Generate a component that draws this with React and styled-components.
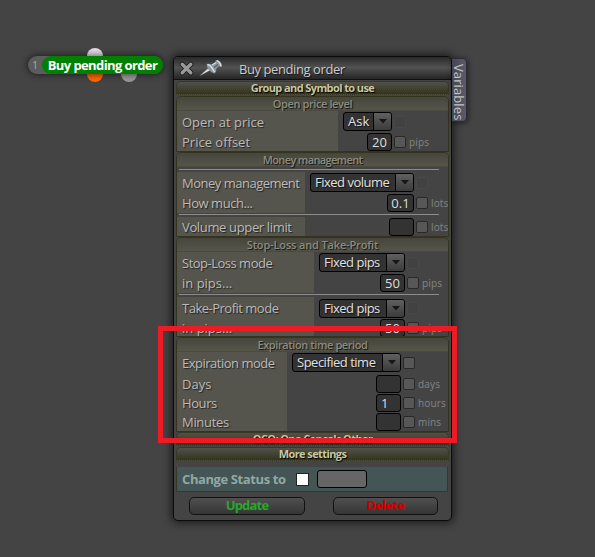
import React from "react";
import styled, { createGlobalStyle } from "styled-components";

const GlobalStyle = createGlobalStyle`
  * { box-sizing: border-box; }
  html, body { margin: 0; height: 557px; overflow: hidden; background: #444; }
  body { font-family: "Open Sans", "Noto Sans", sans-serif; font-size: 13px; color: #bbb; }
`;

const Canvas = styled.div`
  position: relative;
  width: 595px;
  height: 557px;
  background: #444;
  overflow: hidden;
`;

const Node = styled.div`
  position: absolute;
  left: 28px;
  top: 56px;
  width: 135px;
  height: 18px;
  display: flex;
  border-radius: 9px;
  background: #5c5c5c;
  box-shadow: 0 0 6px 1px rgba(0, 0, 0, 0.55);
`;

const NodeIndex = styled.span`
  width: 14px;
  text-align: center;
  font-size: 10px;
  line-height: 18px;
  color: #aaa;
`;

const NodeTitle = styled.div`
  flex: 1;
  border-radius: 9px;
  background: #008000;
  color: #fff;
  font-size: 13px;
  font-weight: 700;
  line-height: 18px;
  text-align: center;
  white-space: nowrap;
  letter-spacing: -0.6px;
`;

const Port = styled.i`
  position: absolute;
  left: ${(p) => p.$x}px;
  top: ${(p) => p.$y}px;
  width: 16px;
  height: 16px;
  border-radius: 50%;
  background: ${(p) => p.$color};
`;

const Dialog = styled.section`
  position: absolute;
  left: 173px;
  top: 56px;
  width: 279px;
  height: 465px;
  border: 1px solid #0b0b0b;
  border-radius: 5px;
  background: #444;
  box-shadow: 0 0 8px 2px rgba(0, 0, 0, 0.6);
`;

const TitleBar = styled.header`
  height: 23px;
  display: flex;
  align-items: center;
  border-bottom: 1px solid #111;
  border-radius: 4px 4px 0 0;
  background: linear-gradient(#292929, #525252 48%, #484848 60%, #252525);
  padding-left: 5px;
`;

const Title = styled.h1`
  margin: 1px 0 0 16px;
  font-size: 13px;
  font-weight: 400;
  line-height: 20px;
  letter-spacing: -0.42px;
  color: #ccc;
  text-shadow: 1px 1px 1px #111;
  white-space: nowrap;
`;

const Content = styled.div`
  width: 273px;
  margin: 1px 0 0 2px;
  display: flex;
  flex-direction: column;
`;

const Bar = styled.div`
  height: 14px;
  margin-bottom: ${(p) => p.$gap || 0}px;
  border: 1px solid #383824;
  border-bottom-style: dotted;
  border-radius: 5px 5px 0 0;
  background: linear-gradient(#515147, #34341f);
  color: #c8c8a0;
  font-size: 11px;
  font-weight: 700;
  letter-spacing: -0.6px;
  line-height: 12px;
  text-align: center;
  text-shadow: 1px 1px 1px #000;
  white-space: nowrap;
`;

const Group = styled.section`
  height: ${(p) => p.$height}px;
  border: 1px solid #33331e;
  border-radius: 5px 5px 0 0;
  overflow: hidden;
`;

const GroupHeader = styled.h2`
  margin: 0;
  height: 14px;
  border-bottom: 1px solid #4a4a40;
  background: linear-gradient(#46463d, #55554a);
  color: #8c8c80;
  font-size: 11px;
  font-weight: 600;
  letter-spacing: ${(p) => p.$spacing}px;
  line-height: 13px;
  text-align: center;
  text-shadow: 1px 1px 1px #111;
`;

const Row = styled.div`
  display: flex;
  align-items: center;
  height: ${(p) => p.$height || 20}px;
`;

const Label = styled.label`
  width: ${(p) => p.$width}px;
  height: 100%;
  padding-left: 5px;
  display: flex;
  align-items: center;
  background: #55554d;
  color: #bbb;
  letter-spacing: ${(p) => p.$spacing || 0}px;
  white-space: nowrap;
  text-shadow: 1px 1px 1px #222;
`;

const Rule = styled.hr`
  width: 260px;
  height: 1px;
  flex: none;
  margin: ${(p) => p.$top || 2}px 0 2px 2px;
  border: 0;
  background: #8c8c8c;
`;

const Field = styled.div`
  width: ${(p) => p.$width || 25}px;
  height: 18px;
  margin-left: auto;
  flex: none;
  border: 1px solid #000;
  border-radius: 3px;
  background: #333;
  color: #ddd;
  line-height: 16px;
  text-align: ${(p) => (p.$start ? "left" : "center")};
  padding-left: ${(p) => (p.$start ? 4 : 0)}px;
  white-space: nowrap;
`;

const Select = styled.div`
  display: flex;
  width: ${(p) => p.$width}px;
  height: 19px;
  margin-left: auto;
  flex: none;
  border: 1px solid #000;
  border-radius: 3px;
  overflow: hidden;
  background: #333;
  color: #e0e0e0;
  line-height: 17px;
  text-shadow: 1px 1px 1px #111;
  white-space: nowrap;
`;

const SelectValue = styled.span`
  flex: 1;
  padding-left: 4px;
  letter-spacing: ${(p) => p.$spacing}px;
`;

const SelectButton = styled.span`
  width: 18px;
  display: grid;
  place-items: center;
  border-left: 1px solid #000;
  background: linear-gradient(#606060, #3b3b3b);
`;

const Unit = styled.div`
  width: ${(p) => p.$width}px;
  padding-left: 2px;
  display: flex;
  align-items: center;
  gap: 3px;
  flex: none;
  color: #858585;
  font-size: 10px;
  letter-spacing: 0.15px;
  white-space: nowrap;
`;

const Check = styled.i`
  width: 12px;
  height: 12px;
  flex: none;
  border: 1px solid ${(p) => (p.$faint ? "#484848" : "#292929")};
  border-radius: 2px;
  background: ${(p) => (p.$faint ? "#424242" : "#575757")};
`;

const Status = styled.div`
  width: 272px;
  height: 25px;
  margin: 6px 0 0 2px;
  padding-left: 5px;
  display: flex;
  align-items: center;
  border: solid #333827;
  border-width: 0 1px 1px;
  background: #435554;
`;

const StatusLabel = styled.span`
  width: 114px;
  color: #93a8a5;
  font-weight: 700;
  letter-spacing: -0.4px;
  line-height: 16px;
  margin-top: -1px;
  white-space: nowrap;
`;

const StatusCheck = styled.i`
  width: 13px;
  height: 13px;
  border: 1px solid #222;
  background: #fff;
`;

const StatusField = styled.i`
  width: 50px;
  height: 18px;
  margin-left: 8px;
  border: 1px solid #000;
  border-radius: 3px;
  background: #666;
`;

const Actions = styled.footer`
  display: flex;
  justify-content: space-between;
  margin: 5px 13px 0 15px;
`;

const Action = styled.button`
  width: ${(p) => p.$width}px;
  height: 18px;
  padding: 0 0 1px;
  border: 1px solid #111;
  border-radius: 5px;
  background: linear-gradient(#505050, #353535);
  color: ${(p) => p.$color};
  font: 700 13px/15px "Open Sans", "Noto Sans", sans-serif;
  letter-spacing: ${(p) => p.$spacing}px;
`;

const Tab = styled.aside`
  position: absolute;
  left: 452px;
  top: 58px;
  width: 15px;
  height: 64px;
  border: 1px solid #2b2b35;
  border-left: 0;
  border-radius: 0 5px 5px 0;
  background: linear-gradient(90deg, #454553, #5b5b6b);
  box-shadow: 1px 1px 5px 1px rgba(0, 0, 0, 0.4);
  color: #c4c4c4;
  font-size: 13px;
  line-height: 14px;
  letter-spacing: 0.1px;
  writing-mode: vertical-rl;
  padding-top: 5px;
  white-space: nowrap;
`;

const Highlight = styled.div`
  position: absolute;
  left: 158px;
  top: 326px;
  width: 299px;
  height: 117px;
  border: 5px solid #ed1c24;
`;

function CloseIcon() {
  return (
    <svg width="15" height="15" viewBox="0 0 15 15">
      <path d="M3.2 3.2 11.8 11.8M11.8 3.2 3.2 11.8" stroke="#181818" strokeWidth="5" strokeLinecap="round" />
      <path d="M3.2 3.2 11.8 11.8M11.8 3.2 3.2 11.8" stroke="#999" strokeWidth="3.4" strokeLinecap="round" />
    </svg>
  );
}

const Pin = styled.svg`
  margin-left: 5px;
`;

function PinIcon() {
  return (
    <Pin width="24" height="18" viewBox="0 0 24 18">
      <path d="M0.5 17 9.5 9 11.5 11Z" fill="#ddd" />
      <path d="M7.5 5.5Q10.5 4 13 6L17 3.5Q15.5 1.5 17.5 1Q23 2 23 7.5Q21 8.5 20 7L17 10Q18 12.5 15.5 14.5Q9 12.5 7.5 5.5Z" fill="#8d979f" />
      <path d="M8.5 5.5Q12 6 15.5 13M13 6 17 3.5M18 1.5Q21 3 22 7" fill="none" stroke="#dce2e5" strokeWidth="1.3" />
      <path d="M15 8.5 19 5.5" stroke="#59636b" strokeWidth="1.5" />
    </Pin>
  );
}

function Dropdown({ width, spacing, children }) {
  return (
    <Select $width={width}>
      <SelectValue $spacing={spacing}>{children}</SelectValue>
      <SelectButton>
        <svg width="8" height="5" viewBox="0 0 8 5">
          <path d="M0 0H8L4 4.5Z" fill="#161616" />
        </svg>
      </SelectButton>
    </Select>
  );
}

function Setting({ label, spacing, labelWidth, height, unitWidth, select, width, value, unit, faint, start }) {
  return (
    <Row $height={height}>
      <Label $width={labelWidth} $spacing={spacing}>{label}</Label>
      {select ? (
        <Dropdown width={width} spacing={select === "Ask" ? 0 : -0.5}>{select}</Dropdown>
      ) : (
        <Field $width={width} $start={start}>{value}</Field>
      )}
      <Unit $width={unitWidth}>
        <Check $faint={faint} />
        {unit}
      </Unit>
    </Row>
  );
}

export default function App() {
  const open = { labelWidth: 161, unitWidth: 56 };
  const money = { labelWidth: 128, unitWidth: 34 };
  const stop = { labelWidth: 137, unitWidth: 43 };
  const expiry = { labelWidth: 110, unitWidth: 47 };
  return (
    <>
      <GlobalStyle />
      <Canvas>
        <Port $x={87} $y={48} $color="#e6d8e6" />
        <Port $x={87} $y={66} $color="#ff6600" />
        <Port $x={121} $y={66} $color="#999" />
        <Node>
          <NodeIndex>1</NodeIndex>
          <NodeTitle>Buy pending order</NodeTitle>
        </Node>
        <Dialog>
          <TitleBar>
            <CloseIcon />
            <PinIcon />
            <Title>Buy pending order</Title>
          </TitleBar>
          <Content>
            <Bar $gap={1}>Group and Symbol to use</Bar>
            <Group $height={56}>
              <GroupHeader $spacing={-0.4}>Open price level</GroupHeader>
              <Setting {...open} label="Open at price" height={21} select="Ask" width={49} faint />
              <Setting {...open} label="Price offset" height={20} value="20" unit="pips" />
            </Group>
            <Group $height={85}>
              <GroupHeader $spacing={-0.65}>Money management</GroupHeader>
              <Rule />
              <Setting {...money} label="Money management" spacing={-0.5} height={21} select="Fixed volume" width={104} faint />
              <Setting {...money} label="How much..." spacing={-0.45} value="0.1" width={27} unit="lots" />
              <Rule $top={1} />
              <Setting {...money} label="Volume upper limit" spacing={-0.35} height={20} unit="lots" />
            </Group>
            <Group $height={100}>
              <GroupHeader $spacing={-0.15}>Stop-Loss and Take-Profit</GroupHeader>
              <Setting {...stop} label="Stop-Loss mode" spacing={-0.5} height={21} select="Fixed pips" width={86} faint />
              <Setting {...stop} label="in pips..." height={20} value="50" unit="pips" />
              <Rule $top={1} />
              <Setting {...stop} label="Take-Profit mode" spacing={-0.5} height={22} select="Fixed pips" width={86} faint />
              <Setting {...stop} label="in pips..." height={18} value="50" unit="pips" />
            </Group>
            <Group $height={95}>
              <GroupHeader $spacing={-0.4}>Expiration time period</GroupHeader>
              <Setting {...expiry} label="Expiration mode" spacing={-0.5} height={21} select="Specified time" width={109} />
              <Setting {...expiry} label="Days" height={21} unit="days" />
              <Setting {...expiry} label="Hours" spacing={-0.4} height={18} value="1" unit="hours" start />
              <Setting {...expiry} label="Minutes" spacing={-0.3} height={19} unit="mins" />
            </Group>
            <Bar $gap={1}>OCO: One Cancels Other</Bar>
            <Bar>More settings</Bar>
          </Content>
          <Status>
            <StatusLabel>Change Status to</StatusLabel>
            <StatusCheck />
            <StatusField />
          </Status>
          <Actions>
            <Action $width={116} $color="#2ca52c" $spacing={-0.8}>Update</Action>
            <Action $width={105} $color="#c80000" $spacing={-0.7}>Delete</Action>
          </Actions>
        </Dialog>
        <Tab>Variables</Tab>
        <Highlight />
      </Canvas>
    </>
  );
}
